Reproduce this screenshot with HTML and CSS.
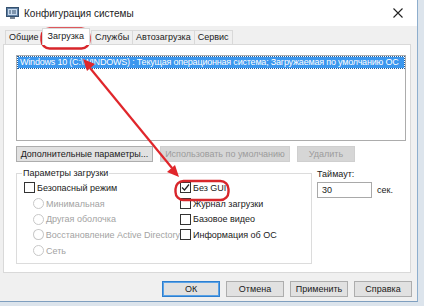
FILE: index.html
```html
<!DOCTYPE html>
<html lang="ru">
<head>
  <meta charset="UTF-8" />
  <title>Конфигурация системы</title>
  <link rel="stylesheet" href="styles.css">
</head>
<body>
  <div class="window">
    <div class="titlebar">
      <svg class="app-icon" width="14" height="14" viewBox="0 0 14 14">
        <rect x="0.5" y="1.5" width="12" height="9" fill="#5f7fa3" stroke="#34506e"/>
        <rect x="2" y="3" width="9" height="6" fill="#c7d9ec"/>
        <rect x="4" y="11" width="5" height="2" fill="#7b8794"/>
        <path d="M3 5h2M3 7h2M6 5h4M6 7h4" stroke="#34506e" stroke-width="1"/>
      </svg>
      <span class="title">Конфигурация системы</span>
      <svg class="close" width="10" height="10" viewBox="0 0 10 10">
        <path d="M0.5 0.5L9.5 9.5M9.5 0.5L0.5 9.5" stroke="#222" stroke-width="1.1"/>
      </svg>
    </div>

    <div class="tabs">
      <span class="tab">Общие</span>
      <span class="tab active">Загрузка</span>
      <span class="tab">Службы</span>
      <span class="tab">Автозагрузка</span>
      <span class="tab">Сервис</span>
    </div>

    <div class="tab-page">
      <div class="listbox">
        <div class="list-row selected">Windows 10 (C:\WINDOWS) : Текущая операционная система; Загружаемая по умолчанию ОС</div>
      </div>

      <div class="list-buttons">
        <button class="btn btn-advanced">Дополнительные параметры...</button>
        <button class="btn btn-default-os" disabled>Использовать по умолчанию</button>
        <button class="btn btn-delete" disabled>Удалить</button>
      </div>

      <div class="options">
        <fieldset class="group">
          <legend>Параметры загрузки</legend>
          <div class="col left-col">
            <label class="check"><span class="box"></span>Безопасный режим</label>
            <label class="radio"><span class="dot"></span>Минимальная</label>
            <label class="radio"><span class="dot"></span>Другая оболочка</label>
            <label class="radio"><span class="dot"></span>Восстановление Active Directory</label>
            <label class="radio"><span class="dot"></span>Сеть</label>
          </div>
          <div class="col right-col">
            <label class="check"><span class="box">
              <svg width="9" height="9" viewBox="0 0 9 9"><path d="M1 4.5L3.5 7L8 1.5" fill="none" stroke="#222" stroke-width="1.2"/></svg>
            </span>Без GUI</label>
            <label class="check"><span class="box"></span>Журнал загрузки</label>
            <label class="check"><span class="box"></span>Базовое видео</label>
            <label class="check"><span class="box"></span>Информация об ОС</label>
          </div>
        </fieldset>

        <div class="timeout">
          <span class="timeout-label">Таймаут:</span>
          <div class="timeout-row">
            <span class="input">30</span>
            <span>сек.</span>
          </div>
        </div>
      </div>
    </div>

    <div class="footer">
      <button class="btn btn-ok">ОК</button>
      <button class="btn">Отмена</button>
      <button class="btn">Применить</button>
      <button class="btn">Справка</button>
    </div>

    <svg class="marks" width="424" height="306" viewBox="0 0 424 306">
      <rect x="41.5" y="28.5" width="48" height="20" rx="8" fill="none" stroke="#d8262b" stroke-width="2.4"/>
      <rect x="175.5" y="181" width="53" height="19" rx="8" fill="none" stroke="#d8262b" stroke-width="2.4"/>
      <line x1="90" y1="68" x2="172" y2="168" stroke="#e0262b" stroke-width="2.2"/>
      <polygon points="83,59 95,64 87,71" fill="#e0262b"/>
      <polygon points="179,177 167,172 175,165" fill="#e0262b"/>
    </svg>
  </div>
</body>
</html>
```

FILE: styles.css
```css
* {
  box-sizing: border-box;
}
body {
  margin: 0;
  background: #dce4ec;
  font-family: "Liberation Sans", Arial, sans-serif;
  font-size: 9px;
  color: #1a1a1a;
}
.window {
  position: relative;
  width: 418px;
  height: 302px;
  background: #f0f0f0;
  border-right: 1px solid #8eaecd;
  border-bottom: 1px solid #7f9fbf;
  display: flex;
  flex-direction: column;
}
.titlebar {
  height: 26px;
  flex-shrink: 0;
  background: #fff;
  display: flex;
  align-items: center;
  padding: 0 6px;
}
.app-icon {
  margin-right: 4px;
}
.title {
  flex: 1;
  font-size: 10px;
  color: #222;
}
.close {
  margin-right: 8px;
}
.tabs {
  display: flex;
  align-items: flex-end;
  height: 18px;
  flex-shrink: 0;
  padding-left: 5px;
}
.tab {
  height: 14px;
  line-height: 13px;
  padding: 0 3px;
  border: 1px solid #d9d9d9;
  border-bottom: none;
  margin-right: -1px;
  background: #f0f0f0;
  white-space: nowrap;
}
.tab.active {
  height: 17px;
  line-height: 15px;
  background: #fff;
  position: relative;
  z-index: 1;
  margin: 0 1px -1px 0;
  padding: 0 5px;
}
.tab-page {
  height: 229px;
  flex-shrink: 0;
  margin: 0 6px 0 3px;
  background: #fff;
  border: 1px solid #d9d9d9;
  padding: 10px 4px 0 12px;
}
.listbox {
  height: 86px;
  border: 1px solid #acacac;
  padding: 1px;
}
.list-row.selected {
  background: #3b97ee;
  color: #fff;
  height: 11px;
  line-height: 11px;
  padding-left: 2px;
  letter-spacing: -0.2px;
  outline: 1px dotted #1d5d9f;
  white-space: nowrap;
  overflow: hidden;
}
.list-buttons {
  display: flex;
  gap: 7px;
  margin-top: 5px;
}
.btn {
  height: 16px;
  padding: 0;
  font: inherit;
  color: #1a1a1a;
  background: #e1e1e1;
  border: 1px solid #adadad;
  white-space: nowrap;
}
.btn:disabled {
  background: #d6d6d6;
  border-color: #cfcfcf;
  color: #9c9c9c;
}
.btn-advanced { width: 137px; }
.btn-default-os { width: 130px; }
.btn-delete { width: 58px; }
.options {
  display: flex;
  margin-top: 6px;
}
.group {
  width: 296px;
  height: 96px;
  margin: 0;
  padding: 2px 0 0 7px;
  border: 1px solid #dcdcdc;
  display: flex;
}
.group legend {
  padding: 0 1px;
  margin-left: -2px;
}
.col {
  display: flex;
  flex-direction: column;
}
.left-col {
  width: 156px;
}
.check,
.radio {
  display: flex;
  align-items: center;
  height: 15.7px;
  white-space: nowrap;
}
.box {
  width: 11px;
  height: 11px;
  border: 1px solid #333;
  background: #fff;
  margin-right: 2px;
  display: flex;
  align-items: center;
  justify-content: center;
}
.radio {
  color: #a3a3a3;
  padding-left: 9px;
}
.dot {
  width: 11px;
  height: 11px;
  border: 1px solid #c8c8c8;
  border-radius: 50%;
  margin-right: 2px;
}
.timeout {
  margin-left: 5px;
  display: flex;
  flex-direction: column;
  gap: 3px;
  padding-top: 1px;
}
.timeout-row {
  display: flex;
  align-items: center;
  gap: 5px;
}
.input {
  width: 55px;
  height: 16px;
  line-height: 14px;
  padding-left: 4px;
  background: #fff;
  border: 1px solid #a9a9a9;
}
.footer {
  display: flex;
  justify-content: flex-end;
  gap: 6px;
  padding: 8px 5px 0 0;
}
.footer .btn {
  width: 58px;
  height: 16px;
}
.footer .btn-ok {
  border-color: #2d7fd0;
  box-shadow: inset 0 0 0 1px #5aa2e6;
}
.marks {
  position: absolute;
  left: 0;
  top: 0;
  pointer-events: none;
}
```
